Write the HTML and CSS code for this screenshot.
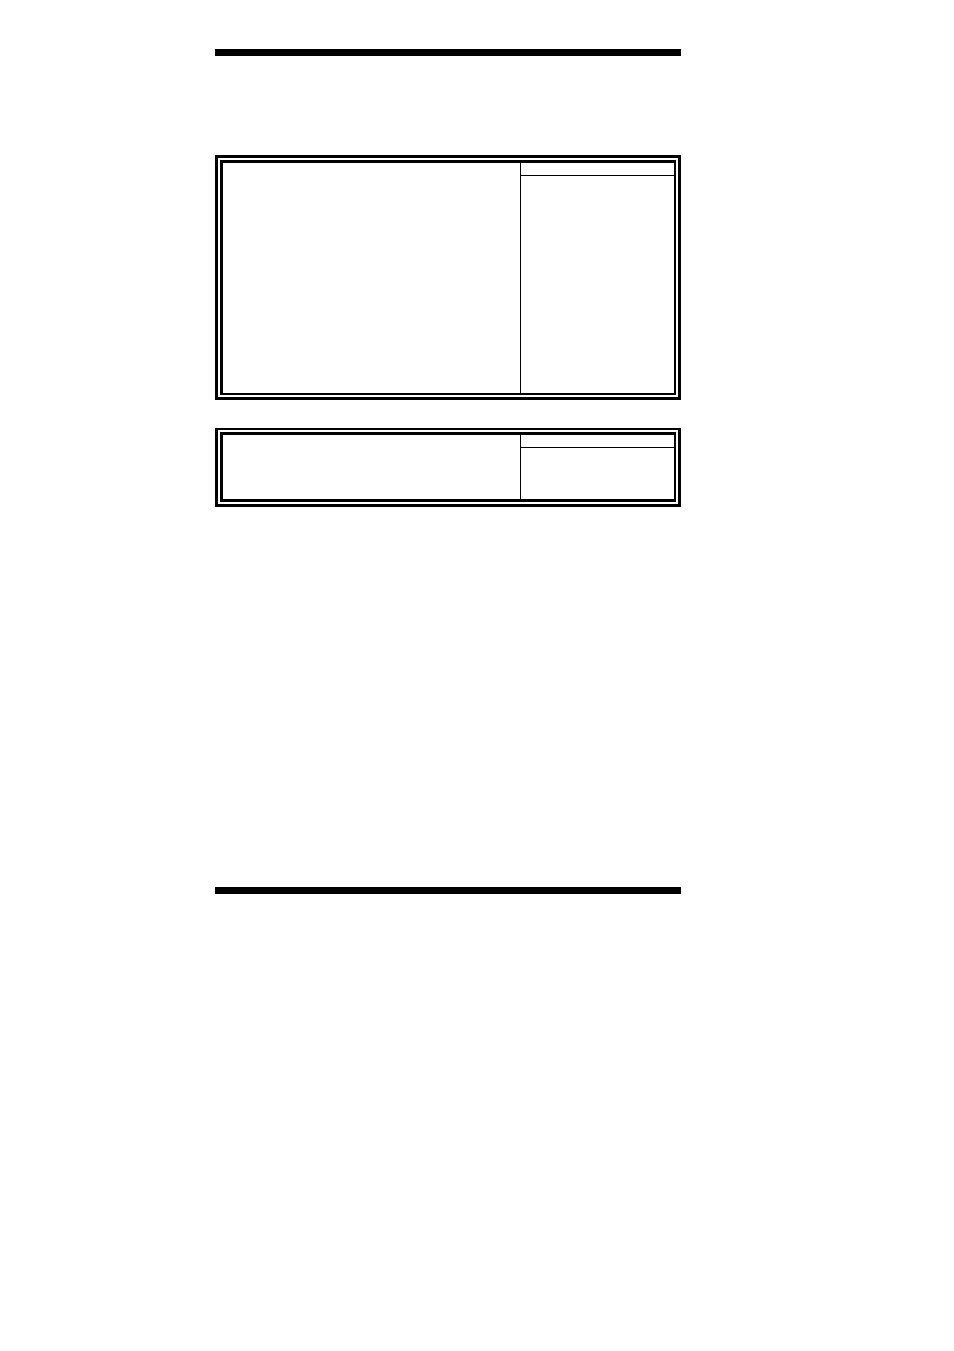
FILE: index.html
```html
<!DOCTYPE html>
<html lang="en">
<head>
<meta charset="utf-8">
<meta name="viewport" content="width=device-width, initial-scale=1">
<title>Page</title>
<link rel="stylesheet" href="styles.css">
</head>
<body>
<main class="sheet">
  <hr class="rule">
  <section class="panel panel-large">
    <div class="panel-inner">
      <div class="panel-main"></div>
      <div class="panel-side">
        <div class="side-head"></div>
        <div class="side-body"></div>
      </div>
    </div>
  </section>
  <section class="panel panel-small">
    <div class="panel-inner">
      <div class="panel-main"></div>
      <div class="panel-side">
        <div class="side-head"></div>
        <div class="side-body"></div>
      </div>
    </div>
  </section>
  <hr class="rule rule-bottom">
</main>
</body>
</html>
```
FILE: styles.css
```css
* {
  box-sizing: border-box;
}

body {
  margin: 0;
  background: #fff;
  font-family: "Liberation Sans", sans-serif;
}

.sheet {
  display: flex;
  flex-direction: column;
  padding: 49px 273px 49px 215px;
}

.rule {
  width: 100%;
  height: 7px;
  margin: 0;
  border: 0;
  background: #000;
}

.rule-bottom {
  margin-top: 380px;
}

.panel {
  padding: 2px;
  border: 3px solid #000;
}

.panel-large {
  margin-top: 99px;
}

.panel-small {
  margin-top: 28px;
  border-top-width: 2px;
}

.panel-inner {
  display: grid;
  grid-template-columns: 297fr 154fr;
  border: 3px solid #000;
  border-right-width: 2px;
}

.panel-large .panel-inner {
  min-height: 235px;
  border-bottom-width: 2px;
}

.panel-small .panel-inner {
  min-height: 70px;
}

.panel-side {
  display: flex;
  flex-direction: column;
  border-left: 1px solid #000;
}

.side-head {
  min-height: 13px;
  border-bottom: 1px solid #000;
}

.side-body {
  flex: 1;
}

@media (max-width: 700px) {
  .sheet {
    padding-right: 24px;
    padding-left: 24px;
  }
}
```
